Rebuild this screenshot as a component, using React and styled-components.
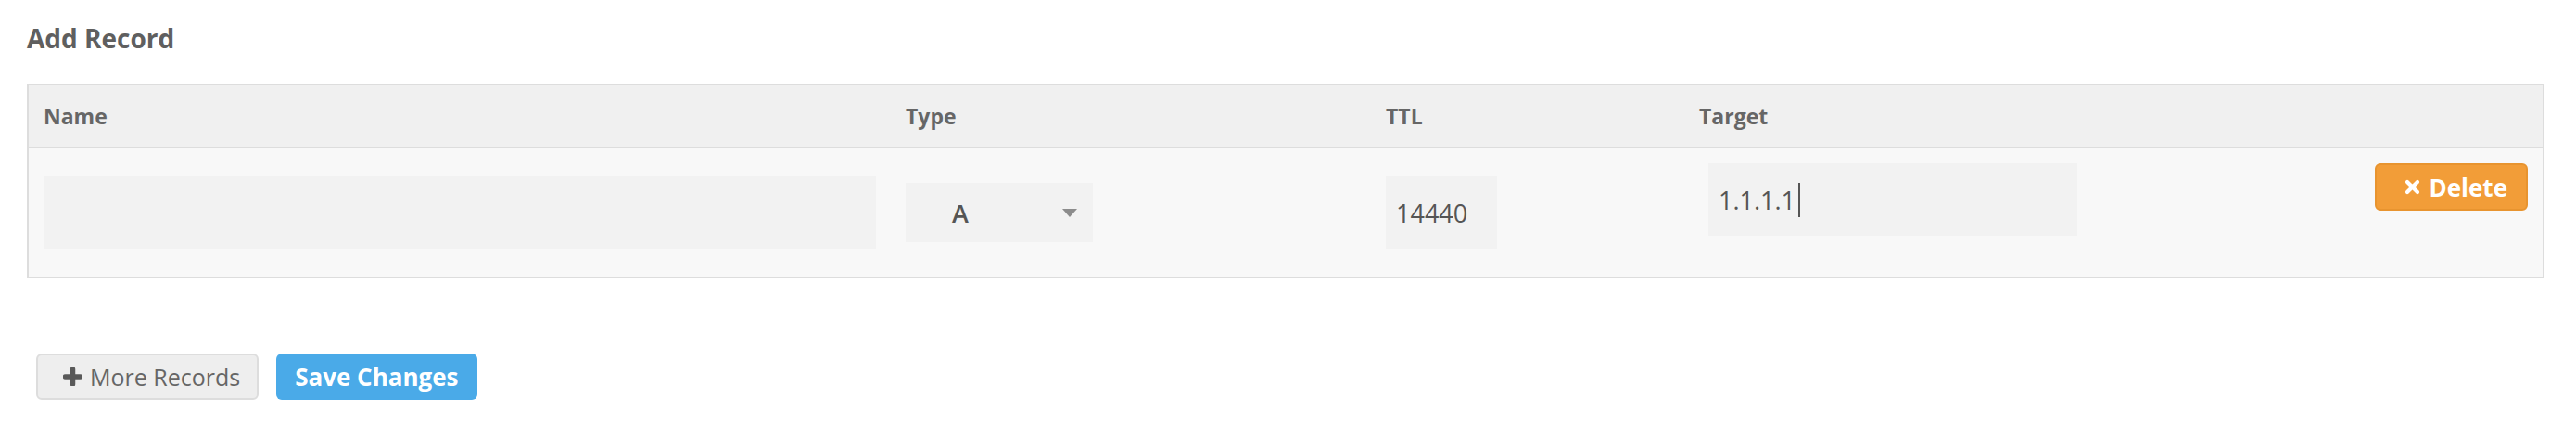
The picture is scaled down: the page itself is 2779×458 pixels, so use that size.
import React from 'react';
import styled, { createGlobalStyle } from 'styled-components';

const GlobalStyle = createGlobalStyle`
  body {
    margin: 0;
    background: #fff;
    font-family: 'Open Sans', 'Liberation Sans', sans-serif;
    color: #555;
  }
`;

const COLUMNS = '930px 518px 338px 440px 1fr';

const StyledWrapper = styled.div`
  padding: 22px 34px 0 29px;
`;

const StyledTitle = styled.h2`
  margin: 0 0 30px;
  font-size: 28px;
  line-height: 38px;
  font-weight: 700;
  color: #5f5f5f;
`;

const StyledTable = styled.div`
  border: 2px solid #dddddd;
`;

const StyledHeaderRow = styled.div`
  display: grid;
  grid-template-columns: ${COLUMNS};
  height: 66px;
  align-items: center;
  background: #f0f0f0;
  border-bottom: 2px solid #dddddd;
`;

const StyledHeaderCell = styled.div`
  padding: 0 16px;
  font-size: 23px;
  font-weight: 700;
  color: #666;
`;

const StyledRow = styled.div`
  display: grid;
  grid-template-columns: ${COLUMNS};
  height: 138px;
  align-items: center;
  background: #f8f8f8;
`;

const StyledCell = styled.div`
  padding: 0 16px;
  display: flex;
  justify-content: ${({ end }) => (end ? 'flex-end' : 'flex-start')};
  align-self: ${({ top }) => (top ? 'start' : 'center')};
  margin-top: ${({ top }) => (top ? '16px' : '0')};
`;

const StyledField = styled.div`
  box-sizing: border-box;
  display: flex;
  align-items: center;
  width: ${({ width }) => width}px;
  height: ${({ height }) => height || 78}px;
  margin-left: ${({ offset }) => offset || 0}px;
  padding-left: 11px;
  background: #f2f2f2;
  font-size: 27px;
  color: #555;
`;

const StyledCaret = styled.span`
  display: inline-block;
  width: 2px;
  height: 37px;
  margin-left: 3px;
  background: #555;
`;

const StyledSelect = styled.div`
  box-sizing: border-box;
  display: flex;
  align-items: center;
  justify-content: space-between;
  width: 202px;
  height: 64px;
  padding: 0 17px 0 50px;
  background: #f2f2f2;
  font-size: 27px;
  font-weight: 600;
  color: #555;
`;

const StyledArrow = styled.span`
  width: 0;
  height: 0;
  border-left: 8px solid transparent;
  border-right: 8px solid transparent;
  border-top: 9px solid #8c8c8c;
`;

const StyledButton = styled.button`
  box-sizing: border-box;
  display: inline-flex;
  align-items: center;
  gap: ${({ gap }) => gap || 9}px;
  height: ${({ height }) => height || 50}px;
  padding: ${({ pad }) => pad || '0 18px'};
  border-radius: 6px;
  font-family: 'Open Sans', 'Liberation Sans', sans-serif;
  font-size: ${({ size }) => size || 26}px;
  font-weight: ${({ weight }) => weight || 700};
  cursor: pointer;
  background: ${({ bg }) => bg};
  color: ${({ fg }) => fg || '#fff'};
  border: 2px solid ${({ line }) => line || 'transparent'};
`;

const StyledActions = styled.div`
  display: flex;
  gap: 19px;
  margin: 81px 0 0 10px;
`;

const CrossIcon = () => (
  <svg width="17" height="17" viewBox="0 0 17 17">
    <path d="M3 3 L14 14 M14 3 L3 14" stroke="#fff" strokeWidth="4.2" strokeLinecap="round" />
  </svg>
);

const PlusIcon = () => (
  <svg width="21" height="20" viewBox="0 0 21 20">
    <path d="M10.5 2 V18 M2.5 10 H18.5" stroke="#595959" strokeWidth="5.5" strokeLinecap="round" />
  </svg>
);

const App = () => (
  <>
    <GlobalStyle />
    <StyledWrapper>
      <StyledTitle>Add Record</StyledTitle>
      <StyledTable>
        <StyledHeaderRow>
          <StyledHeaderCell>Name</StyledHeaderCell>
          <StyledHeaderCell>Type</StyledHeaderCell>
          <StyledHeaderCell>TTL</StyledHeaderCell>
          <StyledHeaderCell>Target</StyledHeaderCell>
          <StyledHeaderCell />
        </StyledHeaderRow>
        <StyledRow>
          <StyledCell>
            <StyledField width={898} />
          </StyledCell>
          <StyledCell>
            <StyledSelect>
              A
              <StyledArrow />
            </StyledSelect>
          </StyledCell>
          <StyledCell>
            <StyledField width={120}>14440</StyledField>
          </StyledCell>
          <StyledCell top>
            <StyledField width={398} offset={10}>
              1.1.1.1
              <StyledCaret />
            </StyledField>
          </StyledCell>
          <StyledCell top end>
            <StyledButton bg="#f29d38" line="#e8942f" height={51} pad="0 20px 0 30px">
              <CrossIcon />
              Delete
            </StyledButton>
          </StyledCell>
        </StyledRow>
      </StyledTable>
      <StyledActions>
        <StyledButton
          bg="#eeeeee"
          line="#dddddd"
          fg="#666"
          weight={400}
          size={25}
          gap={8}
          pad="0 18px 0 27px"
        >
          <PlusIcon />
          More Records
        </StyledButton>
        <StyledButton bg="#4aaae8">Save Changes</StyledButton>
      </StyledActions>
    </StyledWrapper>
  </>
);

export default App;
